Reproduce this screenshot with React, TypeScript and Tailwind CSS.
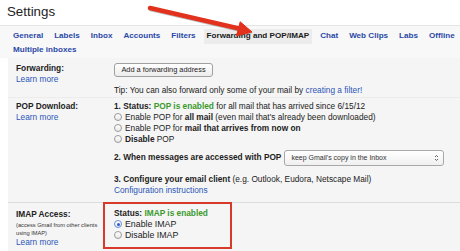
import React from "react";

function Radio({ checked }: { checked?: boolean }) {
  return (
    <span
      className={`mr-[3px] flex h-[8px] w-[8px] shrink-0 items-center justify-center rounded-full border bg-gradient-to-b from-white to-[#e8e8e8] ${
        checked ? "border-[#6b8fd6]" : "border-[#9a9a9a]"
      }`}
    >
      {checked && <span className="h-[3px] w-[3px] rounded-full bg-[#2a5bc8]" />}
    </span>
  );
}

const tabs = ["General", "Labels", "Inbox", "Accounts", "Filters"];
const tabsAfter = ["Chat", "Web Clips", "Labs", "Offline"];

export default function App() {
  return (
    <div className="relative h-[251px] w-[460px] overflow-hidden bg-white font-['Liberation_Sans',Arial,sans-serif] text-[#222]">
      <div className="flex h-[26px] items-center border-b border-[#e4e4e4] pl-[7px] pb-[2px] text-[13.3px] leading-none">
        Settings
      </div>

      <div className="h-[32px] bg-[#f8f8f8] pl-[13px] pt-[3px] text-[8.1px] font-bold leading-none">
        <div className="flex h-[15px] items-center gap-[11px] whitespace-nowrap text-[#2b48a6]">
          {tabs.map((t) => (
            <span key={t}>{t}</span>
          ))}
          <span className="-mx-[3px] flex h-[15px] items-center bg-[#ececec] px-[3px] text-[#1a1a1a]">
            Forwarding and POP/IMAP
          </span>
          {tabsAfter.map((t) => (
            <span key={t}>{t}</span>
          ))}
        </div>
        <div className="flex h-[13px] items-center text-[#2b48a6]">Multiple inboxes</div>
      </div>

      <div className="ml-[8px] h-[193px] bg-[#f5f5f5] text-[8.3px] leading-[11px]">
        {/* Forwarding */}
        <div className="grid h-[40px] grid-cols-[98px_1fr] border-b border-[#ececec] pl-[8px] pt-[5px]">
          <div>
            <div className="font-bold">Forwarding:</div>
            <div className="text-[#2c56b8]">Learn more</div>
          </div>
          <div>
            <div className="flex h-[14px] w-[99px] items-center justify-center rounded-[3px] border border-[#a0a0a0] bg-gradient-to-b from-white to-[#ececec] text-[7.4px] leading-none">
              Add a forwarding address
            </div>
            <div className="mt-[8px] whitespace-nowrap">
              Tip: You can also forward only some of your mail by{" "}
              <span className="text-[#2c56b8]">creating a filter!</span>
            </div>
          </div>
        </div>

        {/* POP */}
        <div className="grid h-[105px] grid-cols-[98px_1fr] border-b border-[#dcdcdc] pl-[8px] pt-[2.5px]">
          <div>
            <div className="font-bold">POP Download:</div>
            <div className="text-[#2c56b8]">Learn more</div>
          </div>
          <div className="whitespace-nowrap">
            <div>
              <b>1. Status: </b>
              <b className="text-[#3a9a2c]">POP is enabled</b> for all mail that has arrived since 6/15/12
            </div>
            <div className="flex items-center">
              <Radio />
              <span>
                Enable POP for <b>all mail</b> (even mail that's already been downloaded)
              </span>
            </div>
            <div className="flex items-center">
              <Radio />
              <span>
                Enable POP for <b>mail that arrives from now on</b>
              </span>
            </div>
            <div className="flex items-center">
              <Radio />
              <span>
                <b>Disable</b> POP
              </span>
            </div>
            <div className="mt-[5px] flex h-[16px] items-center">
              <b>2. When messages are accessed with POP</b>
              <span className="ml-[3px] flex h-[16px] w-[160px] items-center justify-between rounded-[3px] border border-[#a8a8a8] bg-gradient-to-b from-white to-[#f0f0f0] pl-[6px] pr-[4px] text-[7px] text-[#333]">
                keep Gmail's copy in the Inbox
                <svg width="5" height="8" viewBox="0 0 5 8">
                  <path d="M1 3 L2.5 1.5 L4 3 M1 5 L2.5 6.5 L4 5" fill="none" stroke="#555" strokeWidth="0.9" />
                </svg>
              </span>
            </div>
            <div className="mt-[8.5px]">
              <b>3. Configure your email client</b> (e.g. Outlook, Eudora, Netscape Mail)
            </div>
            <div className="text-[#2c56b8]">Configuration instructions</div>
          </div>
        </div>

        {/* IMAP */}
        <div className="grid grid-cols-[98px_1fr] pl-[8px]">
          <div className="pt-[5.5px]">
            <div className="font-bold">IMAP Access:</div>
            <div className="mt-[1px] whitespace-nowrap text-[5.7px] leading-[8px] text-[#333]">
              (access Gmail from other clients
              <br />
              using IMAP)
            </div>
            <div className="text-[#2c56b8]">Learn more</div>
          </div>
          <div className="-mt-px">
            <div className="-ml-[11px] h-[47px] w-[129px] border-2 border-[#d9392b] pl-[9px] pt-[3.5px] whitespace-nowrap">
              <div>
                <b>Status: </b>
                <b className="text-[#3a9a2c]">IMAP is enabled</b>
              </div>
              <div className="flex items-center text-[8.8px]">
                <Radio checked />
                <span>Enable IMAP</span>
              </div>
              <div className="flex items-center text-[8.8px]">
                <Radio />
                <span>Disable IMAP</span>
              </div>
            </div>
          </div>
        </div>
      </div>

      <svg className="pointer-events-none absolute left-0 top-0" width="460" height="60" viewBox="0 0 460 60">
        <g transform="translate(0.6,1)" opacity="0.25">
          <line x1="150" y1="8" x2="239" y2="28.6" stroke="#000" strokeWidth="4.6" strokeLinecap="round" />
          <polygon points="252,32 236.6,35.8 240.2,21.8" fill="#000" />
        </g>
        <line x1="150" y1="8" x2="239" y2="28.6" stroke="#e2311d" strokeWidth="4.6" strokeLinecap="round" />
        <polygon points="252,32 236.6,35.8 240.2,21.8" fill="#e2311d" stroke="#e2311d" strokeWidth="1" strokeLinejoin="round" />
      </svg>
    </div>
  );
}
